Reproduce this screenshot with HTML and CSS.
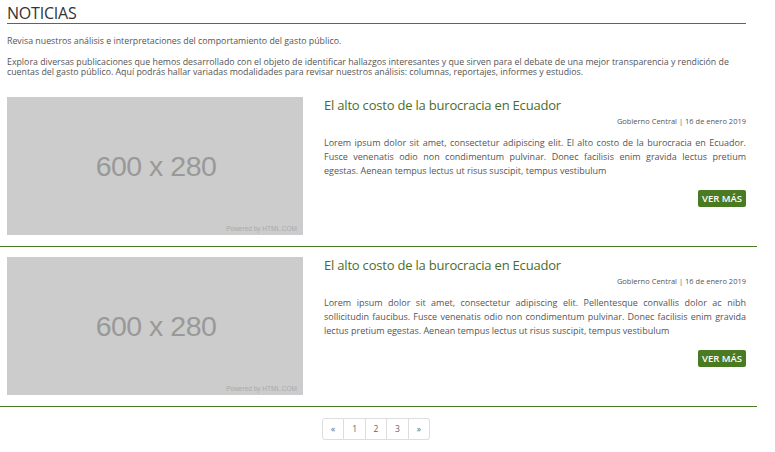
FILE: index.html
```html
<!DOCTYPE html>
<html lang="es">
<head>
<meta charset="utf-8">
<title>Noticias</title>
<link rel="stylesheet" href="styles.css">
</head>
<body>
<div class="page">
  <header class="intro">
    <h1 class="title">NOTICIAS</h1>
    <p class="lead">Revisa nuestros análisis e interpretaciones del comportamiento del gasto público.</p>
    <p class="lead">Explora diversas publicaciones que hemos desarrollado con el objeto de identificar hallazgos interesantes y que sirven para el debate de una mejor transparencia y rendición de cuentas del gasto público. Aquí podrás hallar variadas modalidades para revisar nuestros análisis: columnas, reportajes, informes y estudios.</p>
  </header>

  <article class="item">
    <div class="thumb">
      <span class="thumb-size">600 x 280</span>
      <span class="thumb-credit">Powered by HTML.COM</span>
    </div>
    <div class="body">
      <h2 class="item-title">El alto costo de la burocracia en Ecuador</h2>
      <div class="meta">Gobierno Central | 16 de enero 2019</div>
      <p class="text">Lorem ipsum dolor sit amet, consectetur adipiscing elit. El alto costo de la burocracia en Ecuador. Fusce venenatis odio non condimentum pulvinar. Donec facilisis enim gravida lectus pretium egestas. Aenean tempus lectus ut risus suscipit, tempus vestibulum</p>
      <div class="actions"><a class="btn" href="#">VER MÁS</a></div>
    </div>
  </article>

  <article class="item">
    <div class="thumb">
      <span class="thumb-size">600 x 280</span>
      <span class="thumb-credit">Powered by HTML.COM</span>
    </div>
    <div class="body">
      <h2 class="item-title">El alto costo de la burocracia en Ecuador</h2>
      <div class="meta">Gobierno Central | 16 de enero 2019</div>
      <p class="text">Lorem ipsum dolor sit amet, consectetur adipiscing elit. Pellentesque convallis dolor ac nibh sollicitudin faucibus. Fusce venenatis odio non condimentum pulvinar. Donec facilisis enim gravida lectus pretium egestas. Aenean tempus lectus ut risus suscipit, tempus vestibulum</p>
      <div class="actions"><a class="btn" href="#">VER MÁS</a></div>
    </div>
  </article>

  <nav class="pager">
    <a href="#" class="pg pg-arrow">«</a>
    <a href="#" class="pg">1</a>
    <a href="#" class="pg">2</a>
    <a href="#" class="pg">3</a>
    <a href="#" class="pg pg-arrow">»</a>
  </nav>
</div>
</body>
</html>
```

FILE: styles.css
```css
* { box-sizing: border-box; }
html, body { margin: 0; padding: 0; background: #fff; }
body {
  font-family: "Open Sans", "Noto Sans", sans-serif;
  color: #555;
}
.page { width: 757px; }

.intro { padding: 0 11px 0 7px; }
.title {
  margin: 0;
  padding-top: 4px;
  padding-bottom: 0;
  font-size: 16px;
  font-weight: 400;
  line-height: 19px;
  color: #333;
  letter-spacing: -0.2px;
  border-bottom: 1px solid #4a7a22;
}
.lead {
  margin: 12px 0 0;
  font-size: 8.8px;
  line-height: 10px;
  color: #555;
}
.lead + .lead { margin-top: 11px; }

.item {
  display: flex;
  padding: 20px 11px 11px 7px;
  border-bottom: 1px solid #4a7a22;
}
.item + .item { padding-top: 10px; }

.thumb {
  flex: 0 0 296px;
  height: 138px;
  background: #cccccc;
  display: flex;
  flex-direction: column;
  align-items: center;
  justify-content: center;
  position: relative;
}
.thumb-size {
  font-family: "Liberation Sans", Arial, sans-serif;
  font-size: 28.5px;
  color: #999;
  letter-spacing: -0.5px;
  margin-left: 2px;
}
.thumb-credit {
  position: absolute;
  right: 6px;
  bottom: 3px;
  font-family: "Liberation Sans", Arial, sans-serif;
  font-size: 6.5px;
  color: #aaa;
}

.body {
  flex: 1;
  margin-left: 21px;
  display: flex;
  flex-direction: column;
}
.item-title {
  margin: 0;
  font-size: 13px;
  font-weight: 400;
  line-height: 17px;
  letter-spacing: -0.2px;
  color: #4a6e1f;
}
.meta {
  text-align: right;
  font-size: 7.5px;
  line-height: 10px;
  margin-top: 2px;
  color: #555;
}
.text {
  margin: 10px 0 0;
  font-size: 9px;
  line-height: 14px;
  text-align: justify;
  color: #555;
}
.actions {
  display: flex;
  justify-content: flex-end;
  margin-top: 12px;
}
.btn {
  display: inline-block;
  background: #4a7a22;
  color: #fff;
  font-size: 9.5px;
  font-weight: 600;
  line-height: 17px;
  padding: 0 4px;
  border-radius: 2px;
  text-decoration: none;
}

.pager {
  display: flex;
  justify-content: center;
  margin-top: 11px;
  margin-right: 5px;
}
.pager .pg {
  display: block;
  width: 21.4px;
  height: 22px;
  line-height: 20px;
  text-align: center;
  font-size: 8.5px;
  color: #666;
  text-decoration: none;
  border: 1px solid #ddd;
  border-left: 0;
}
.pager .pg:first-child { border-left: 1px solid #ddd; width: 22.4px; border-radius: 3px 0 0 3px; }
.pager .pg:last-child { border-radius: 0 3px 3px 0; }
.pg-arrow { font-size: 7px; color: #888; }
```
